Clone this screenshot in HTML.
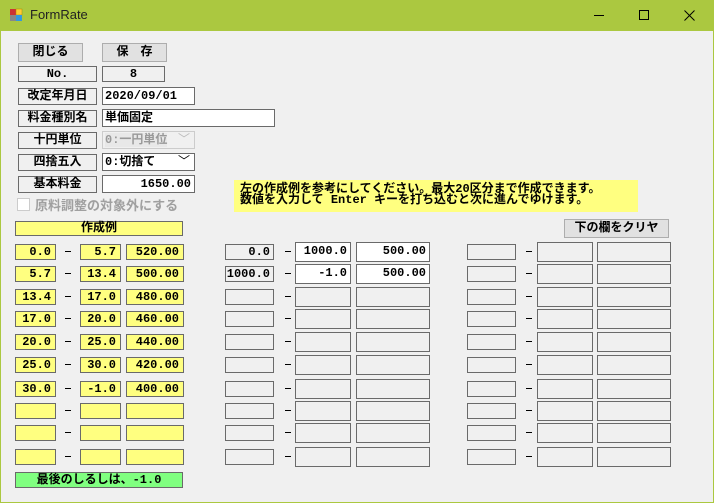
<!DOCTYPE html>
<html><head><meta charset="utf-8"><style>
*{box-sizing:border-box;margin:0;padding:0}
body{width:714px;height:503px;background:#f0f0f0;position:relative;overflow:hidden;font-family:"Liberation Mono","Noto Sans CJK JP",monospace;font-weight:bold;font-size:12px;color:#000}
.tb{position:absolute;left:0;top:0;width:714px;height:31px;background:#abc840}
.frame{position:absolute;left:0;top:31px;width:714px;height:472px;border:1px solid #abc840;border-top:none}
.a{position:absolute;line-height:14px;white-space:nowrap}
.l{border:1px solid #6a6a6a;text-align:center;background:#f0f0f0}
.y{border:1px solid #6a6a6a;background:#ffff80;text-align:right;padding-right:4px}
.g{border:1px solid #6a6a6a;background:#f0f0f0;text-align:right;padding-right:3px}
.w{border:1px solid #6a6a6a;background:#fff;text-align:right;padding-right:3px}
.btn{border:1px solid #adadad;background:#e1e1e1;text-align:center;line-height:17px}
.d{position:absolute;width:6px;height:1px;background:#000}
</style></head><body>
<div class="tb"></div>
<div class="frame"></div>
<svg style="position:absolute;left:9px;top:8px" width="14" height="14"><rect x="1" y="1" width="6" height="6" fill="#c33"/><rect x="7" y="1" width="6" height="6" fill="#fc3" stroke="#a80" stroke-width=".5"/><rect x="1" y="7" width="6" height="6" fill="#888"/><rect x="7" y="7" width="6" height="6" fill="#39d"/></svg>
<div class="a" style="left:30px;top:8px;font-family:'Liberation Sans',sans-serif;font-weight:normal;font-size:13px;color:#222">FormRate</div>
<div style="position:absolute;left:594px;top:15px;width:10px;height:1px;background:#000"></div>
<div style="position:absolute;left:639px;top:10px;width:10px;height:10px;border:1px solid #000"></div>
<svg style="position:absolute;left:684px;top:10px" width="11" height="11"><path d="M0.5 0.5L10.5 10.5M10.5 0.5L0.5 10.5" stroke="#000"/></svg>

<div class="a btn" style="left:18px;top:43px;width:65px;height:19px">閉じる</div>
<div class="a btn" style="left:102px;top:43px;width:65px;height:19px">保　存</div>
<div class="a l" style="left:18px;top:66px;width:79px;height:16px">No.</div>
<div class="a l" style="left:102px;top:66px;width:63px;height:16px">8</div>
<div class="a l" style="left:18px;top:88px;width:79px;height:17px">改定年月日</div>
<div class="a w" style="left:102px;top:87px;width:93px;height:18px;text-align:left;padding-left:2px;line-height:16px">2020/09/01</div>
<div class="a l" style="left:18px;top:110px;width:79px;height:17px">料金種別名</div>
<div class="a w" style="left:102px;top:109px;width:173px;height:18px;text-align:left;padding-left:2px;line-height:16px">単価固定</div>
<div class="a l" style="left:18px;top:132px;width:79px;height:17px">十円単位</div>
<div class="a" style="left:102px;top:131px;width:93px;height:18px;border:1px solid #ccc;color:#999;padding-left:2px;line-height:16px"><span style="background:#e8e8e8">0:一円単位</span><span style="position:absolute;right:4px;color:#bbb;font-weight:normal">﹀</span></div>
<div class="a l" style="left:18px;top:154px;width:79px;height:17px">四捨五入</div>
<div class="a w" style="left:102px;top:153px;width:93px;height:18px;text-align:left;padding-left:2px;line-height:16px">0:切捨て<span style="position:absolute;right:4px;font-weight:normal">﹀</span></div>
<div class="a l" style="left:18px;top:176px;width:79px;height:17px">基本料金</div>
<div class="a w" style="left:102px;top:175px;width:93px;height:18px;line-height:16px">1650.00</div>
<div class="a" style="left:17px;top:198px;width:13px;height:13px;border:1px solid #ccc;background:#fff"></div>
<div class="a" style="left:35px;top:197px;color:#a0a0a0;font-family:'Noto Sans CJK JP',sans-serif;font-size:13px;line-height:15px">原料調整の対象外にする</div>

<div class="a" style="left:234px;top:180px;width:404px;height:32px;background:#ffff80;padding-left:6px;line-height:11px;padding-top:4px;font-size:12px">左の作成例を参考にしてください。最大20区分まで作成できます。<br>数値を入力して Enter キーを打ち込むと次に進んでゆけます。</div>
<div class="a btn" style="left:564px;top:219px;width:105px;height:19px">下の欄をクリヤ</div>
<div class="a l" style="left:15px;top:221px;width:168px;height:15px;background:#ffff80;line-height:13px">作成例</div>

<div id="rows"></div>
<div class="a l" style="left:15px;top:472px;width:168px;height:16px;background:#80ff80;line-height:14px">最後のしるしは、-1.0</div>
<script>
var ys=[244,266,289,311,334,357,381,403,425,449];
var L=[["0.0","5.7","520.00"],["5.7","13.4","500.00"],["13.4","17.0","480.00"],["17.0","20.0","460.00"],["20.0","25.0","440.00"],["25.0","30.0","420.00"],["30.0","-1.0","400.00"]];
var h="";
ys.forEach(function(y,i){
 var r=L[i]||["","",""];
 h+='<div class="a y" style="left:15px;top:'+y+'px;width:41px;height:16px">'+r[0]+'</div>';
 h+='<div class="d" style="left:65px;top:'+(y+7)+'px"></div>';
 h+='<div class="a y" style="left:80px;top:'+y+'px;width:41px;height:16px">'+r[1]+'</div>';
 h+='<div class="a y" style="left:126px;top:'+y+'px;width:58px;height:16px">'+r[2]+'</div>';
 var m=i==0?["0.0","1000.0","500.00"]:i==1?["1000.0","-1.0","500.00"]:["","",""];
 var wb=i<2?"w":"g";
 h+='<div class="a g" style="left:225px;top:'+y+'px;width:49px;height:16px">'+m[0]+'</div>';
 h+='<div class="d" style="left:285px;top:'+(y+7)+'px"></div>';
 h+='<div class="a '+wb+'" style="left:295px;top:'+(y-2)+'px;width:56px;height:20px;line-height:16px">'+m[1]+'</div>';
 h+='<div class="a '+wb+'" style="left:356px;top:'+(y-2)+'px;width:74px;height:20px;line-height:16px">'+m[2]+'</div>';
 h+='<div class="a g" style="left:467px;top:'+y+'px;width:49px;height:16px"></div>';
 h+='<div class="d" style="left:526px;top:'+(y+7)+'px"></div>';
 h+='<div class="a g" style="left:537px;top:'+(y-2)+'px;width:56px;height:20px"></div>';
 h+='<div class="a g" style="left:597px;top:'+(y-2)+'px;width:74px;height:20px"></div>';
});
document.getElementById("rows").innerHTML=h;
</script>
</body></html>
